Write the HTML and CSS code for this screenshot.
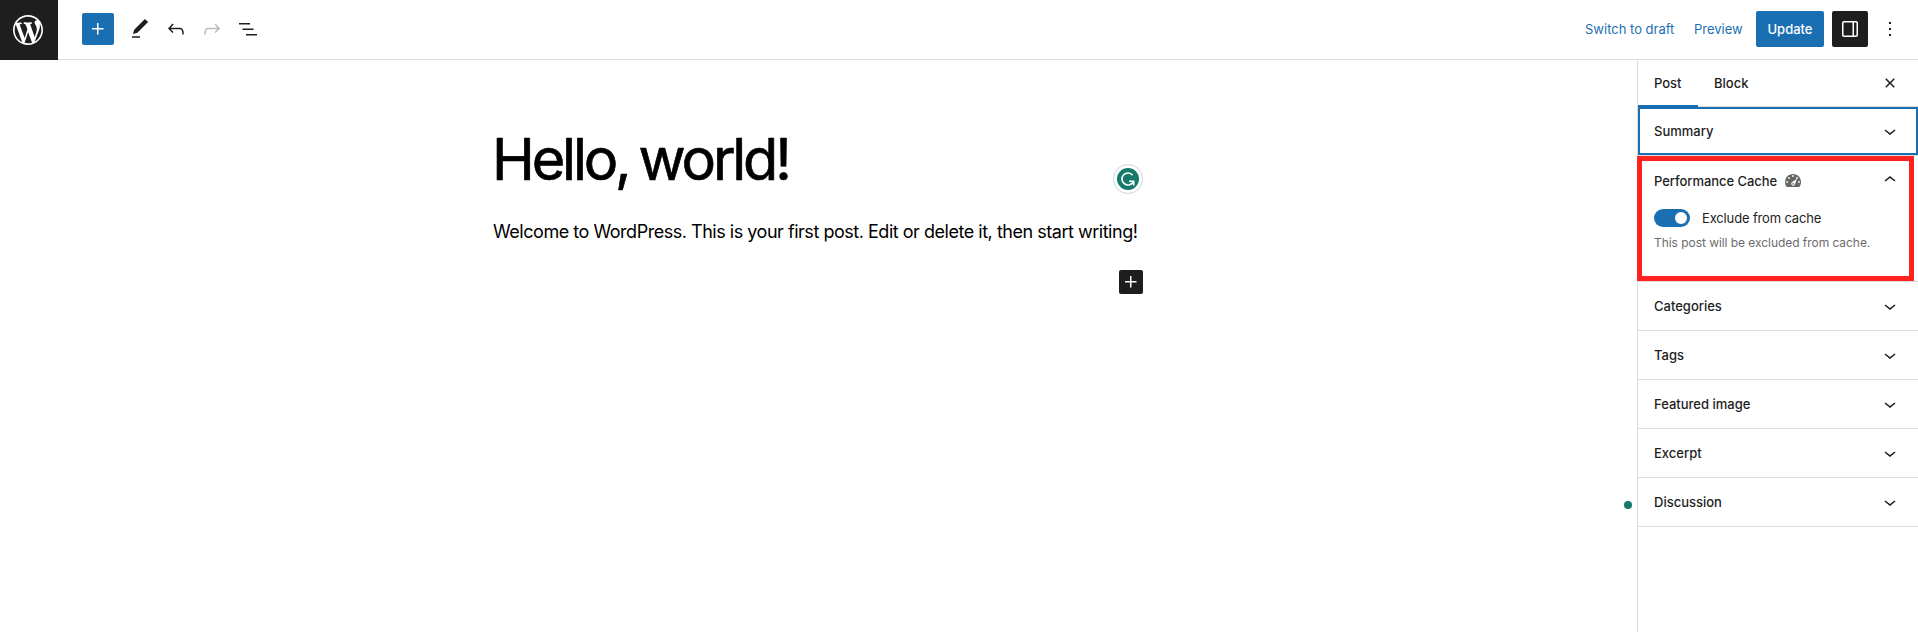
FILE: index.html
```html
<!DOCTYPE html>
<html lang="en">
<head>
<meta charset="utf-8">
<title>Edit Post</title>
<link rel="stylesheet" href="styles.css">
</head>
<body>
<svg class="defs" aria-hidden="true">
  <symbol id="plus" viewBox="0 0 24 24"><path d="M11 12.5V17.5H12.5V12.5H17.5V11H12.5V6H11V11H6V12.5H11Z"/></symbol>
  <symbol id="down" viewBox="0 0 24 24"><path d="M17.5 11.6L12 16l-5.5-4.4.9-1.2L12 14l4.5-3.6 1 1.2z"/></symbol>
  <symbol id="up" viewBox="0 0 24 24"><path d="M6.5 12.4L12 8l5.5 4.4-.9 1.2L12 10l-4.5 3.6-1-1.2z"/></symbol>
</svg>
<div class="editor">
  <header class="header">
    <a class="logo"><svg width="36" height="36" viewBox="-2 -2 24 24"><path d="M20 10c0-5.51-4.49-10-10-10C4.48 0 0 4.49 0 10c0 5.52 4.48 10 10 10 5.51 0 10-4.48 10-10zM7.78 15.37L4.37 6.22c.55-.02 1.17-.08 1.17-.08.5-.06.44-1.13-.06-1.11 0 0-1.45.11-2.37.11-.18 0-.37 0-.58-.01C4.12 2.69 6.87 1.11 10 1.11c2.33 0 4.45.87 6.05 2.34-.68-.11-1.65.39-1.65 1.58 0 .74.45 1.36.9 2.1.35.61.55 1.36.55 2.46 0 1.49-1.4 5-1.4 5l-3.03-8.37c.54-.02.82-.17.82-.17.5-.05.44-1.25-.06-1.22 0 0-1.44.12-2.38.12-.87 0-2.33-.12-2.33-.12-.5-.03-.56 1.2-.06 1.22l.92.08 1.26 3.41zM17.41 10c.24-.64.74-1.87.43-4.25.7 1.29 1.05 2.71 1.05 4.25 0 3.29-1.73 6.24-4.4 7.78.97-2.59 1.94-5.2 2.92-7.78zM6.1 18.09C3.12 16.65 1.11 13.53 1.11 10c0-1.3.23-2.48.72-3.59C3.25 10.3 4.67 14.2 6.1 18.09zm4.03-6.63l2.58 6.98c-.86.29-1.76.45-2.71.45-.79 0-1.57-.11-2.29-.33.81-2.38 1.62-4.74 2.42-7.1z"/></svg></a>
    <div class="tools">
      <button class="inserter"><svg class="icon"><use href="#plus"/></svg></button>
      <svg class="icon" viewBox="0 0 24 24"><path d="M20.1 5.1L16.9 2 6.2 12.7l-1.3 4.4 4.5-1.3L20.1 5.1zM4 20.8h8v-1.5H4v1.5z"/></svg>
      <svg class="icon" viewBox="0 0 24 24"><path d="M18.3 11.7c-.6-.6-1.4-.9-2.3-.9H6.7l2.9-3.3-1.1-1-4.5 5L8.5 16l1-1-2.7-2.7H16c.5 0 .9.2 1.3.5 1 1 1 3.4 1 4.5v.3h1.5v-.2c0-1.5 0-4.3-1.5-5.7z"/></svg>
      <svg class="icon disabled" viewBox="0 0 24 24"><path d="M15.6 6.5l-1.1 1 2.9 3.3H8c-.9 0-1.7.3-2.3.9-1.4 1.5-1.4 4.2-1.4 5.6v.2h1.5v-.3c0-1.1 0-3.5 1-4.5.3-.3.7-.5 1.3-.5h9.2L14.5 15l1.1 1.1 4.6-4.6-4.6-5z"/></svg>
      <svg class="icon" viewBox="0 0 24 24"><path d="M3 6h11v1.5H3V6Zm3.5 5.5h11V13h-11v-1.5ZM21 17H10v1.5h11V17Z"/></svg>
    </div>
    <div class="actions">
      <a class="link draft">Switch to draft</a>
      <a class="link preview">Preview</a>
      <button class="update">Update</button>
      <button class="panel-toggle"><svg class="icon" viewBox="0 0 24 24"><path d="M18 4H6c-1.1 0-2 .9-2 2v12c0 1.1.9 2 2 2h12c1.1 0 2-.9 2-2V6c0-1.1-.9-2-2-2zm-4 14.5H6c-.3 0-.5-.2-.5-.5V6c0-.3.2-.5.5-.5h8.500v13zm4.500-.5c0 .3-.2.5-.5.5h-2v-13h2c.3 0 .5.2.5.5v12z"/></svg></button>
      <svg class="icon more" viewBox="0 0 24 24"><path d="M13 19h-2v-2h2v2zm0-6h-2v-2h2v2zm0-6h-2V5h2v2z"/></svg>
    </div>
  </header>
  <div class="body">
    <main class="canvas">
      <h1 class="title">Hello, world!</h1>
      <p class="text">Welcome to WordPress. This is your first post. Edit or delete it, then start writing!</p>
      <button class="appender"><svg class="icon"><use href="#plus"/></svg></button>
      <svg class="grammar" width="30" height="30" viewBox="0 0 30 30"><circle cx="15" cy="15" r="14.500" fill="#fff" stroke="#cfd3e0"/><circle cx="15" cy="15" r="11" fill="#157a69"/><path d="M19.600 11.200A6 6 0 1 0 20 18.300M16 17.200h4.700v4.200" fill="none" stroke="#fff" stroke-width="1.600"/></svg>
      <span class="dot"></span>
    </main>
    <aside class="sidebar">
      <div class="tabs"><span class="tab active">Post</span><span class="tab">Block</span>
        <svg class="icon" viewBox="0 0 24 24"><path d="M12 13.06l3.712 3.713 1.061-1.060L13.061 12l3.712-3.712-1.060-1.060L12 10.938 8.288 7.227l-1.061 1.060L10.939 12l-3.712 3.712 1.060 1.061L12 13.061z"/></svg></div>
      <div class="row focused"><span>Summary</span><svg class="icon"><use href="#down"/></svg></div>
      <section class="panel">
        <div class="cache">
          <div class="cache-head"><span>Performance Cache</span>
            <svg class="gauge" width="20" height="20" viewBox="0 0 20 20"><path fill="#666" d="M3.760 16h12.480c1.100-1.370 1.760-3.110 1.760-5 0-4.420-3.580-8-8-8s-8 3.580-8 8c0 1.890.66 3.630 1.760 5z"/><g fill="#fff"><circle cx="10" cy="5" r=".9"/><circle cx="6" cy="7" r=".9"/><circle cx="14" cy="7" r=".9"/><circle cx="4" cy="11" r=".9"/><circle cx="16" cy="11" r=".9"/><path d="M14 7.800L11.800 13.700a1.900 1.900 0 1 1-2.900-2.400z"/></g><circle cx="10.200" cy="12.800" r=".9" fill="#666"/></svg>
            <svg class="icon"><use href="#up"/></svg></div>
          <label class="control"><span class="switch"></span><span>Exclude from cache</span></label>
          <p class="help">This post will be excluded from cache.</p>
        </div>
      </section>
      <div class="row"><span>Categories</span><svg class="icon"><use href="#down"/></svg></div>
      <div class="row"><span>Tags</span><svg class="icon"><use href="#down"/></svg></div>
      <div class="row"><span>Featured image</span><svg class="icon"><use href="#down"/></svg></div>
      <div class="row"><span>Excerpt</span><svg class="icon"><use href="#down"/></svg></div>
      <div class="row"><span>Discussion</span><svg class="icon"><use href="#down"/></svg></div>
    </aside>
  </div>
</div>
</body>
</html>
```

FILE: styles.css
```css
* { box-sizing: border-box; }
body { margin: 0; background: #fff; color: #1e1e1e; font: 13px/20px Inter, sans-serif; }
button { border: 0; padding: 0; font: inherit; display: flex; align-items: center; justify-content: center; border-radius: 2px; color: #fff; }
.defs { position: absolute; width: 0; height: 0; }
.icon { width: 24px; height: 24px; fill: currentColor; flex: none; display: block; }
.editor { height: 632px; display: flex; flex-direction: column; overflow: hidden; }
.header { height: 60px; flex: none; display: flex; border-bottom: 1px solid #ddd; }
.logo { width: 58px; height: 60px; background: #1e1e1e; fill: #fff; display: flex; align-items: center; padding-left: 10px; }
.tools { display: flex; align-items: center; gap: 12px; padding: 0 0 1px 24px; height: 59px; }
.inserter { width: 32px; height: 32px; background: #1a6fb3; margin-right: 2px; }
.disabled { color: #bbb; }
.actions { margin-left: auto; display: flex; align-items: center; padding: 0 16px 1px 0; }
.link { color: #1a6fb3; white-space: nowrap; }
.draft { width: 109px; }
.preview { width: 62px; }
.update { width: 68px; height: 36px; background: #1a6fb3; font-weight: 500; }
.panel-toggle { width: 36px; height: 36px; background: #1e1e1e; margin: 0 10px 0 8px; }
.body { flex: 1; display: flex; min-height: 0; }
.canvas { flex: 1; position: relative; padding: 63px 0 0 492px; color: #000; }
.title { margin: 0; font-size: 57.600px; line-height: 72px; font-weight: 400; letter-spacing: -3.150px; word-spacing: -3px; -webkit-text-stroke: .7px #000; white-space: nowrap; }
.text { margin: 23px 0 0 1px; font-size: 18px; line-height: 28px; letter-spacing: -.475px; white-space: nowrap; }
.appender { width: 24px; height: 24px; background: #1e1e1e; margin: 24px 0 0 627px; }
.grammar { position: absolute; left: 1113px; top: 104px; }
.dot { position: absolute; left: 1624px; top: 441px; width: 8px; height: 8px; border-radius: 50%; background: #157a69; }
.sidebar { width: 281px; flex: none; border-left: 1px solid #ddd; font-weight: 500; }
.tabs { height: 47px; display: flex; align-items: flex-start; border-bottom: 1px solid #ddd; padding-right: 16px; }
.tab { height: 47px; padding: 0 16px; line-height: 47px; }
.tab.active { width: 60px; border-bottom: 2px solid #1a6fb3; }
.tabs .icon { margin: 11px 0 0 auto; }
.row { height: 49px; border-bottom: 1px solid #ddd; display: flex; align-items: center; justify-content: space-between; padding: 0 16px; }
.focused { box-shadow: inset 0 0 0 2px #1a6fb3; }
.panel { border-bottom: 1px solid #ddd; }
.cache { height: 125px; width: 277px; margin-left: -1px; border: 5px solid #ff221e; padding: 8px 7px 0 12px; }
.cache-head { display: flex; align-items: center; height: 24px; letter-spacing: -.06px; }
.gauge { margin-left: 6px; }
.cache-head .icon { margin: -3px 0 0 auto; }
.control { display: flex; align-items: center; gap: 12px; font-weight: 400; margin-top: 15px; height: 20px; letter-spacing: -.15px; }
.switch { width: 36px; height: 18px; border-radius: 9px; background: #1a6fb3; display: flex; justify-content: flex-end; align-items: center; padding-right: 3px; }
.switch::before { content: ""; width: 12px; height: 12px; border-radius: 50%; background: #fff; }
.help { margin: 6px 0 0; font-size: 12px; line-height: 18px; font-weight: 400; letter-spacing: -.05px; color: #6c6c6c; white-space: nowrap; }
```
